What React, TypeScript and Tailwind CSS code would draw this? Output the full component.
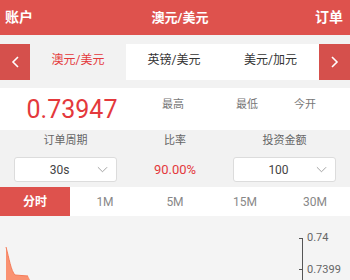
import React from 'react';

const font = { fontFamily: 'Roboto, "Noto Sans CJK SC", sans-serif' };

const Chevron = ({ dir }: { dir: 'left' | 'right' | 'down' }) => {
  const d =
    dir === 'left' ? 'M8 2 L3 7 L8 12' : dir === 'right' ? 'M3 2 L8 7 L3 12' : 'M1 1 L6 6 L11 1';
  if (dir === 'down') {
    return (
      <svg width="11" height="7" viewBox="0 0 12 7" fill="none" stroke="#9a9a9a" strokeWidth="1">
        <path d={d} />
      </svg>
    );
  }
  return (
    <svg width="11" height="14" viewBox="0 0 11 14" fill="none" stroke="#fff" strokeWidth="1.6">
      <path d={d} />
    </svg>
  );
};

const Select = ({ value }: { value: string }) => (
  <div className="flex h-[25px] w-[103px] items-center rounded-[3px] border border-[#dcdcdc] bg-white">
    <span className="flex-1 pl-[16px] text-center text-[12px] text-[#444]">{value}</span>
    <span className="flex w-[28px] justify-center">
      <Chevron dir="down" />
    </span>
  </div>
);

export default function App() {
  const periods = ['分时', '1M', '5M', '15M', '30M'];
  return (
    <div className="h-[280px] w-[350px] overflow-hidden bg-[#f2f2f2]" style={font}>
      {/* header */}
      <div className="flex h-[35px] items-center justify-between bg-[#de524d] px-[5px] text-white">
        <span className="text-[14px] font-bold">账户</span>
        <span className="pl-[12px] text-[13px] font-bold">澳元/美元</span>
        <span className="pr-[2px] text-[14px] font-bold">订单</span>
      </div>

      {/* pair tabs */}
      <div className="mt-[9px] flex h-[36px] bg-white">
        <div className="flex w-[30px] items-center justify-center bg-[#d5504c]">
          <Chevron dir="left" />
        </div>
        <div className="flex w-[96px] justify-center bg-[#f2f2f2] pt-[7px] text-[12px] text-[#e4393c]">澳元/美元</div>
        <div className="flex w-[96px] justify-center pt-[7px] text-[12px] text-[#333]">英镑/美元</div>
        <div className="flex w-[97px] justify-center pt-[7px] text-[12px] text-[#333]">美元/加元</div>
        <div className="flex w-[31px] items-center justify-center bg-[#d5504c]">
          <Chevron dir="right" />
        </div>
      </div>

      {/* price row */}
      <div className="mt-[8px] flex h-[42px] bg-white">
        <div className="flex w-[144px] items-center justify-center text-[25px] leading-none text-[#e4393c]">0.73947</div>
        <div className="flex pt-[9px] text-[11px] text-[#777]">
          <span className="ml-[18px]">最高</span>
          <span className="ml-[52px]">最低</span>
          <span className="ml-[36px]">今开</span>
        </div>
      </div>

      {/* order settings */}
      <div className="flex h-[57px] px-[14px] pt-[5px]">
        <div className="flex w-[103px] flex-col items-center">
          <span className="text-[11px] leading-[12px] text-[#666]">订单周期</span>
          <div className="mt-[10px]">
            <Select value="30s" />
          </div>
        </div>
        <div className="flex flex-1 flex-col items-center">
          <span className="text-[11px] leading-[12px] text-[#666]">比率</span>
          <span className="mt-[16px] text-[13px] leading-[14px] text-[#e4393c]">90.00%</span>
        </div>
        <div className="flex w-[103px] flex-col items-center">
          <span className="text-[11px] leading-[12px] text-[#666]">投资金额</span>
          <div className="mt-[10px]">
            <Select value="100" />
          </div>
        </div>
      </div>

      {/* period tabs */}
      <div className="flex h-[29px] bg-white">
        {periods.map((p, i) => (
          <div
            key={p}
            className={
              i === 0
                ? 'flex w-[70px] items-center justify-center bg-[#de524d] text-[12px] font-bold text-white'
                : 'flex w-[70px] items-center justify-center text-[12px] text-[#888]'
            }
          >
            {p}
          </div>
        ))}
      </div>

      {/* chart */}
      <div className="h-[64px] bg-[#f4f4f4]">
        <svg width="350" height="64" viewBox="0 0 350 64">
          <path d="M6 64 L6 31 C9 42 11 55 15 59 L28 60 L30 64 Z" fill="#fa9272" />
          <path d="M6 31 C9 42 11 55 15 59 L28 60" fill="none" stroke="#f47c5a" strokeWidth="1" />
          <line x1="302.5" y1="22" x2="302.5" y2="64" stroke="#555" strokeWidth="1" />
          <line x1="299" y1="22.5" x2="302.5" y2="22.5" stroke="#555" strokeWidth="1" />
          <line x1="299" y1="53.5" x2="302.5" y2="53.5" stroke="#555" strokeWidth="1" />
          <text x="307" y="25" fontSize="11" fill="#666" fontFamily="Roboto, sans-serif">0.74</text>
          <text x="307" y="57" fontSize="11" fill="#666" fontFamily="Roboto, sans-serif">0.7399</text>
        </svg>
      </div>
    </div>
  );
}
